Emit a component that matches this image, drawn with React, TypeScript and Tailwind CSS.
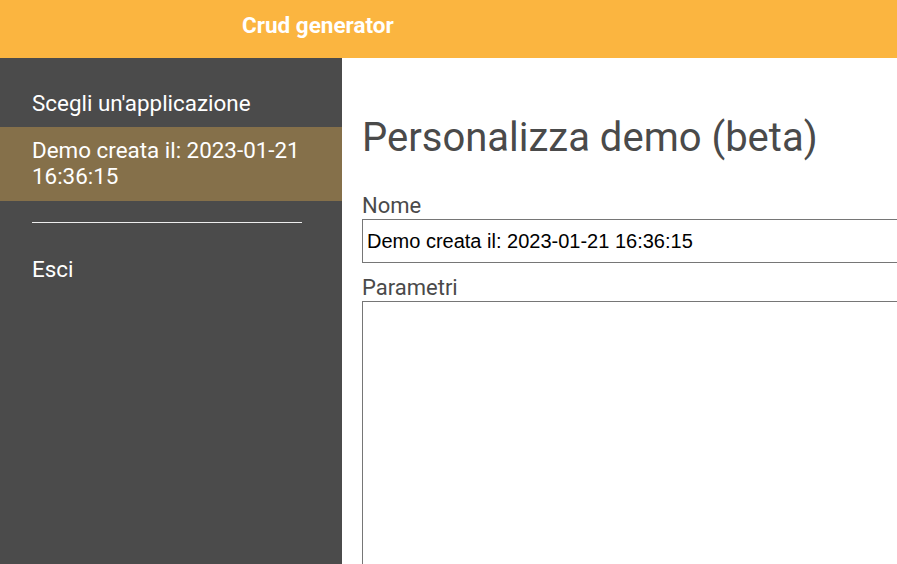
export default function App() {
  return (
    <div className="h-[564px] w-[897px] overflow-hidden flex flex-col bg-white" style={{ fontFamily: 'Roboto, "Noto Sans", sans-serif' }}>
      {/* Barra superiore */}
      <header className="h-[58px] shrink-0 bg-[#fbb540] flex items-center pl-[242px] pb-[7px]">
        <h1 className="text-white font-bold text-[22.5px] leading-none">Crud generator</h1>
      </header>

      <div className="flex flex-1 min-h-0">
        {/* Menu laterale */}
        <nav className="w-[342px] shrink-0 bg-[#4b4b4b] text-white text-[22.4px] leading-[26px]">
          <div className="pt-[32px]">
            <a className="block px-8 pb-[11px]">Scegli un'applicazione</a>
            <a className="block bg-[#85704a] px-8 pt-[10px] pb-[12px]">Demo creata il: 2023-01-21 16:36:15</a>
            <div className="ml-8 mr-10 mt-[21px] border-t border-white/90" />
            <a className="block px-8 pt-[33px]">Esci</a>
          </div>
        </nav>

        {/* Contenuto */}
        <main className="flex-1 min-w-0 pl-5 text-[#4a4a4a]">
          <h2 className="text-[40px] leading-none mt-[60px] mb-[35px]">Personalizza demo (beta)</h2>
          <label className="block text-[22px] leading-[26px]">Nome</label>
          <input
            className="block w-[620px] h-[44px] border border-[#767676] px-1 text-[20px] text-black outline-none"
            style={{ fontFamily: '"Liberation Sans", Arial, sans-serif' }}
            defaultValue="Demo creata il: 2023-01-21 16:36:15"
          />
          <label className="block text-[22px] leading-[26px] mt-[12px]">Parametri</label>
          <textarea className="block w-[620px] h-[400px] border border-[#767676] resize-none outline-none" />
        </main>
      </div>
    </div>
  )
}
